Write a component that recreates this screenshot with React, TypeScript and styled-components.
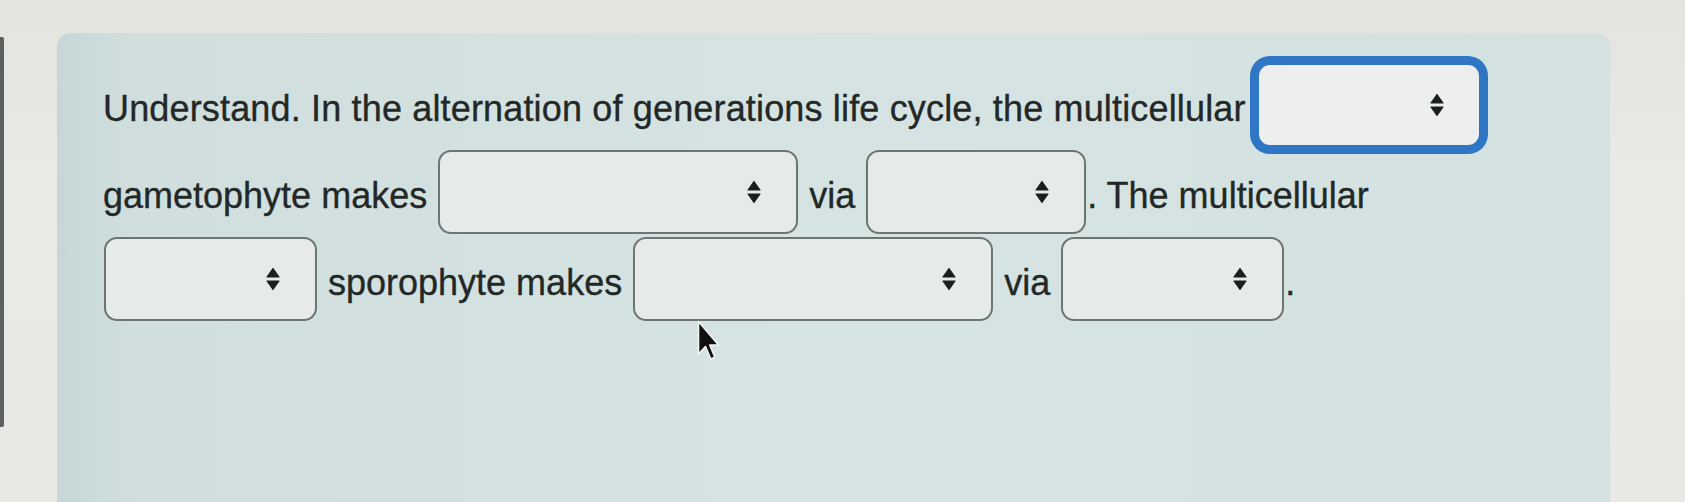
import styled, { createGlobalStyle } from "styled-components";

const GlobalStyle = createGlobalStyle`
  html, body {
    margin: 0;
    padding: 0;
  }
  body {
    width: 1685px;
    height: 502px;
    overflow: hidden;
    background: #e8e9e5;
    font-family: "Liberation Sans", Arial, sans-serif;
  }
`;

const Page = styled.div`
  position: relative;
  display: flex;
  align-items: flex-start;
  width: 1685px;
  height: 502px;
  overflow: hidden;
  background: linear-gradient(to bottom, #e3e4e0 0%, #e9eae6 35%, #e8e9e5 100%);
`;

const EdgeStrip = styled.div`
  flex: none;
  width: 4px;
  height: 390px;
  margin-top: 37px;
  background: #5b5f5e;
  border-radius: 0 2px 2px 0;
`;

const Card = styled.section`
  flex: none;
  box-sizing: border-box;
  width: 1553px;
  height: 500px;
  margin: 33px 0 0 53px;
  padding: 30px 0 0 46px;
  border-radius: 14px 14px 0 0;
  background: linear-gradient(
    to right,
    #c7d7d7 0px,
    #d0dfde 80px,
    #d5e4e2 50%,
    #d3e2e0 100%
  );
`;

const Sentence = styled.div`
  font-size: 36px;
  color: #232827;
  -webkit-text-stroke: 0.35px #232827;
`;

const Line = styled.div<{ $tracking?: number }>`
  height: 87px;
  line-height: 92px;
  white-space: nowrap;
  letter-spacing: ${(p) => p.$tracking ?? 0}px;
`;

const SelectBox = styled.span<{ $width: number; $focused?: boolean }>`
  display: inline-flex;
  align-items: center;
  justify-content: flex-end;
  box-sizing: border-box;
  width: ${(p) => p.$width}px;
  height: 84px;
  margin: 0 1px 13px;
  padding-right: 35px;
  vertical-align: middle;
  border: 2px solid ${(p) => (p.$focused ? "#2f76c4" : "#6d7573")};
  border-radius: 13px;
  background: ${(p) => (p.$focused ? "#edefee" : "#e6ebe9")};
  box-shadow: ${(p) => (p.$focused ? "0 0 0 7px #2f76c4" : "none")};
`;

const Cursor = styled.svg`
  position: absolute;
  left: 697px;
  top: 320px;
`;

const SortArrows = () => (
  <svg width="14" height="24" viewBox="0 0 14 24">
    <path
      d="M7 1.5 L13 10 L1 10 Z M1 14 L13 14 L7 22.5 Z"
      fill="#1b1f1f"
      stroke="#1b1f1f"
      strokeWidth="1.2"
      strokeLinejoin="round"
    />
  </svg>
);

type SelectProps = { width: number; focused?: boolean };

const Select = ({ width, focused }: SelectProps) => (
  <SelectBox role="combobox" $width={width} $focused={focused}>
    <SortArrows />
  </SelectBox>
);

export default function App() {
  return (
    <>
      <GlobalStyle />
      <Page>
        <EdgeStrip />
        <Card>
          <Sentence>
            <Line $tracking={0.16}>
              Understand. In the alternation of generations life cycle, the
              multicellular{" "}
              <Select width={224} focused />
            </Line>
            <Line>
              gametophyte makes <Select width={360} /> via{" "}
              <Select width={220} />. The multicellular
            </Line>
            <Line>
              <Select width={213} /> sporophyte makes <Select width={360} />{" "}
              via <Select width={223} />.
            </Line>
          </Sentence>
        </Card>
        <Cursor width="24" height="44" viewBox="0 0 24 44">
          <path
            d="M1.5 1.5 L1.5 34 L8.5 26.5 L13.8 39 L17.8 37.2 L12.8 25 L21.5 25 Z"
            fill="#111"
            stroke="#f4f4f4"
            strokeWidth="1.6"
            strokeLinejoin="round"
          />
        </Cursor>
      </Page>
    </>
  );
}
